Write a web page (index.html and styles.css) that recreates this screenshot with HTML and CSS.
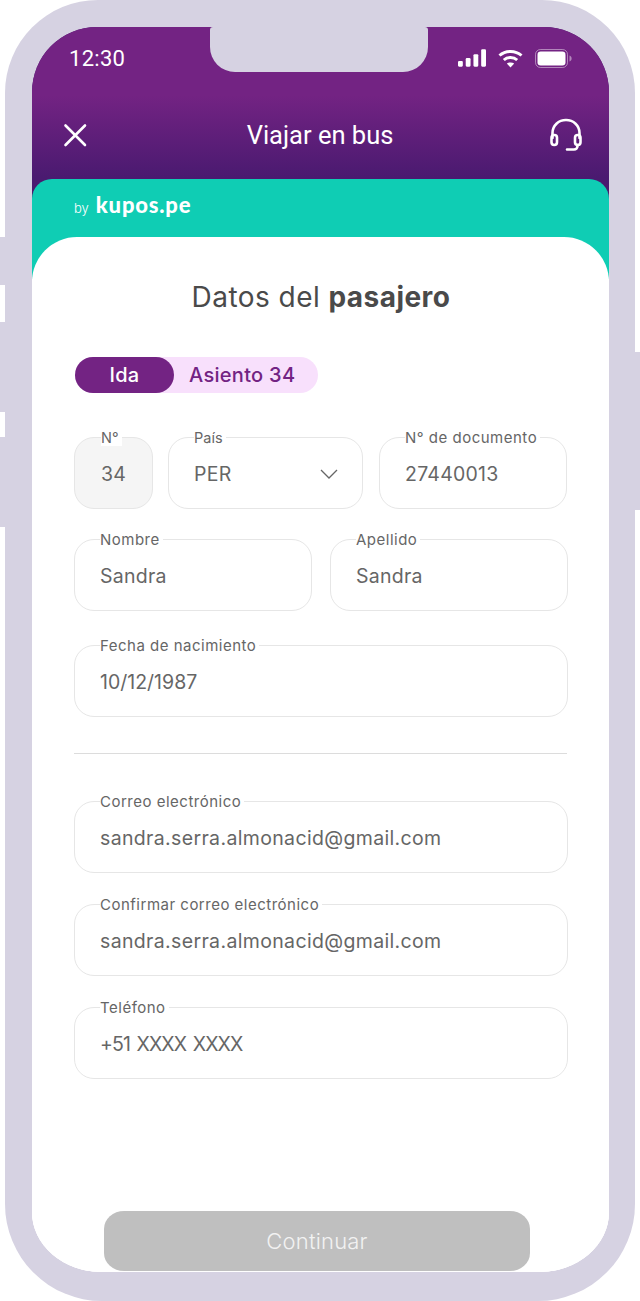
FILE: index.html
```html
<!DOCTYPE html>
<html lang="es">
<head>
    <meta charset="UTF-8">
    <meta name="viewport" content="width=device-width, initial-scale=1.0">
    <title>Viajar en bus</title>
    <link rel="stylesheet" href="styles.css">
</head>
<body>
    <div class="phone">
        <span class="side-btn left btn-a"></span>
        <span class="side-btn left btn-b"></span>
        <span class="side-btn left btn-c"></span>
        <span class="side-btn right btn-d"></span>

        <div class="screen">
            <div class="notch"></div>
            <header class="top">
                <div class="status">
                    <span class="time">12:30</span>
                    <div class="status-icons">
                        <svg width="28" height="18" viewBox="0 0 29 18" fill="#fff">
                            <rect x="0" y="12" width="5" height="6" rx="1.2"/>
                            <rect x="8" y="9" width="5" height="9" rx="1.2"/>
                            <rect x="16" y="5" width="5" height="13" rx="1.2"/>
                            <rect x="24" y="0" width="5" height="18" rx="1.2"/>
                        </svg>
                        <svg width="25" height="19" viewBox="0 0 25 19" fill="none" stroke="#fff" stroke-width="3">
                            <path d="M1.5 6.5C7.5 1 17.5 1 23.5 6.5"/>
                            <path d="M5.8 11C9.5 7.7 15.5 7.7 19.2 11"/>
                            <path d="M12.5 18.5L8.8 14.6C10.8 13 14.2 13 16.2 14.6Z" fill="#fff" stroke="none"/>
                        </svg>
                        <svg width="37" height="19" viewBox="0 0 37 19" fill="none">
                            <rect x="0.5" y="0.5" width="32" height="18" rx="5" stroke="#fff" stroke-opacity="0.45"/>
                            <rect x="2.5" y="2.5" width="28" height="14" rx="3.2" fill="#fff"/>
                            <path d="M34.5 6.5C36 7 36.6 8.2 36.6 9.5C36.6 10.8 36 12 34.5 12.5Z" fill="#fff" fill-opacity="0.45"/>
                        </svg>
                    </div>
                </div>
                <div class="appbar">
                    <svg class="close-icon" width="24" height="24" viewBox="0 0 24 24" fill="none" stroke="#fff" stroke-width="2.6" stroke-linecap="round">
                        <path d="M2.5 2.5L22 22"/>
                        <path d="M22 2.5L2.5 22"/>
                    </svg>
                    <h1 class="appbar-title">Viajar en bus</h1>
                    <svg class="help-icon" width="34" height="34" viewBox="0 0 34 34" fill="none" stroke="#fff" stroke-width="2.6" stroke-linecap="round">
                        <path d="M3.5 20V15C3.5 7.5 9.5 2 17 2C24.500 2 30.500 7.500 30.500 15V20"/>
                        <rect x="2.500" y="17" width="5.500" height="10" rx="2.700"/>
                        <rect x="26" y="17" width="5.500" height="10" rx="2.700"/>
                        <path d="M28.500 27V28C28.500 30 27 31.500 25 31.500H18"/>
                    </svg>
                </div>
            </header>

            <div class="brand-card">
                <div class="brand">
                    <span class="brand-by">by</span>
                    <span class="brand-name">kupos.pe</span>
                </div>
                <main class="sheet">
                    <h2 class="title">Datos del <b>pasajero</b></h2>

                    <div class="trip">
                        <span class="trip-tag">Ida</span>
                        <span class="trip-seat">Asiento 34</span>
                    </div>

                    <div class="row row-first">
                        <div class="field field-seat">
                            <span class="label label-plain label-seat">N°</span>
                            <span class="value">34</span>
                        </div>
                        <div class="field field-country">
                            <span class="label label-plain">País</span>
                            <span class="value">PER</span>
                            <svg class="chevron" width="18" height="10" viewBox="0 0 18 10" fill="none" stroke="#666" stroke-width="1.3">
                                <path d="M1 1L9 9L17 1"/>
                            </svg>
                        </div>
                        <div class="field field-doc">
                            <span class="label">N° de documento</span>
                            <span class="value">27440013</span>
                        </div>
                    </div>

                    <div class="row row-name">
                        <div class="field">
                            <span class="label">Nombre</span>
                            <span class="value">Sandra</span>
                        </div>
                        <div class="field">
                            <span class="label">Apellido</span>
                            <span class="value">Sandra</span>
                        </div>
                    </div>

                    <div class="field field-birth">
                        <span class="label">Fecha de nacimiento</span>
                        <span class="value value-date">10/12/1987</span>
                    </div>

                    <hr class="divider">

                    <div class="field">
                        <span class="label">Correo electrónico</span>
                        <span class="value value-email">sandra.serra.almonacid@gmail.com</span>
                    </div>
                    <div class="field field-confirm">
                        <span class="label">Confirmar correo electrónico</span>
                        <span class="value value-email">sandra.serra.almonacid@gmail.com</span>
                    </div>
                    <div class="field field-phone">
                        <span class="label">Teléfono</span>
                        <span class="value value-phone">+51 XXXX XXXX</span>
                    </div>

                    <button class="continue" type="button">Continuar</button>
                </main>
            </div>
        </div>
    </div>
</body>
</html>
```

FILE: styles.css
```css
body {
  margin: 0;
  background: #fff;
  font-family: 'Inter', 'Open Sans', sans-serif;
}

.phone {
  position: relative;
  box-sizing: border-box;
  width: 630px;
  height: 1301px;
  margin: 0 5px;
  padding: 27px 26px 29px 27px;
  background: #d6d2e2;
  border-radius: 93px 93px 97px 97px;
}

.side-btn {
  position: absolute;
  width: 6px;
  background: #d6d2e2;
}

.side-btn.left { left: -5px; }
.side-btn.right { right: -5px; }
.btn-a { top: 237px; height: 48px; }
.btn-b { top: 322px; height: 90px; }
.btn-c { top: 437px; height: 90px; }
.btn-d { top: 352px; height: 158px; }

.screen {
  position: relative;
  display: flex;
  flex-direction: column;
  height: 100%;
  overflow: hidden;
  background: linear-gradient(#4a1a70 200px, #fff 200px);
  border-radius: 65px 65px 70px 70px / 65px 65px 60px 60px;
}

.notch {
  position: absolute;
  top: 0;
  left: 178px;
  width: 218px;
  height: 45px;
  background: #d6d2e2;
  border-radius: 3px 3px 25px 25px;
}

.top {
  height: 152px;
  background: linear-gradient(#732383 0, #732383 68px, #4a1a70 150px);
  color: #fff;
}

.status {
  display: flex;
  justify-content: space-between;
  align-items: center;
  height: 62px;
  padding: 0 37px 0 37px;
}

.time {
  font-family: 'Roboto', sans-serif;
  font-size: 22px;
  letter-spacing: 0.3px;
}

.status-icons {
  display: flex;
  align-items: center;
  gap: 12px;
}

.appbar {
  display: flex;
  justify-content: space-between;
  align-items: center;
  height: 48px;
  margin-top: 22px;
  padding: 0 26px 0 31px;
}

.appbar-title {
  margin: 0 0 0 4px;
  font-family: 'Roboto', sans-serif;
  font-size: 25.5px;
  font-weight: 400;
}

.brand-card {
  flex: 1;
  display: flex;
  flex-direction: column;
  min-height: 0;
  background: linear-gradient(#0fcdb4 100px, #fff 100px);
  border-radius: 20px 20px 0 0;
}

.brand {
  display: flex;
  align-items: baseline;
  gap: 7px;
  height: 58px;
  box-sizing: border-box;
  padding: 12px 0 0 42px;
  color: #fff;
}

.brand-by {
  font-size: 13px;
  font-weight: 300;
}

.brand-name {
  font-family: 'Lato', sans-serif;
  font-size: 22px;
  font-weight: 900;
  letter-spacing: 0.8px;
}

.sheet {
  flex: 1;
  position: relative;
  padding: 0 41px 0 42px;
  background: #fff;
  border-radius: 45px 45px 0 0;
}

.title {
  margin: 0;
  padding-top: 42px;
  text-align: center;
  font-size: 28px;
  line-height: 36px;
  font-weight: 400;
  letter-spacing: 0.45px;
  color: #4a4a4a;
}

.title b {
  font-weight: 700;
}

.trip {
  display: inline-flex;
  align-items: center;
  width: 243px;
  height: 36px;
  margin: 42px 0 0 1px;
  background: #f8e0fc;
  border-radius: 18px;
  font-size: 20px;
  font-weight: 500;
  letter-spacing: 0.3px;
}

.trip-tag {
  width: 99px;
  height: 36px;
  line-height: 36px;
  text-align: center;
  color: #fff;
  background: #732383;
  border-radius: 18px;
}

.trip-seat {
  margin-left: 15px;
  color: #732383;
}

.row {
  display: flex;
}

.row-first {
  gap: 15px;
  margin-top: 44px;
}

.row-name {
  gap: 18px;
  margin-top: 30px;
}

.row-name .field {
  flex: 1;
}

.field {
  position: relative;
  box-sizing: border-box;
  display: flex;
  align-items: center;
  height: 72px;
  padding: 2px 25px 0;
  border: 1px solid #e6e6e6;
  border-radius: 20px;
  background: #fff;
}

.label {
  position: absolute;
  top: -8px;
  left: 25px;
  padding-right: 3px;
  background: #fff;
  font-size: 15px;
  line-height: 16px;
  letter-spacing: 0.5px;
  color: #666;
}

.label-plain {
  font-size: 14.5px;
  letter-spacing: 0;
}

.value {
  font-size: 19.5px;
  letter-spacing: 0.25px;
  color: #666;
}

.value-date {
  letter-spacing: 0;
}

.value-email {
  letter-spacing: 0.35px;
}

.value-phone {
  letter-spacing: -0.9px;
  word-spacing: 2px;
}

.field-seat {
  width: 79px;
  justify-content: center;
  padding: 2px 0 0;
  background: #f5f5f5;
}

.label-seat {
  left: 26px;
}

.field-country {
  width: 195px;
}

.chevron {
  position: absolute;
  right: 24px;
  top: 31px;
}

.field-doc {
  flex: 1;
  margin: 0 1px;
}

.field-birth {
  margin-top: 34px;
}

.divider {
  height: 1px;
  margin: 36px 1px 47px 0;
  border: 0;
  background: #dcdcdc;
}

.field-confirm {
  margin-top: 31px;
}

.field-phone {
  margin-top: 31px;
}

.continue {
  position: absolute;
  left: 72px;
  bottom: 1px;
  width: 426px;
  height: 60px;
  border: 0;
  border-radius: 20px / 18px;
  background: #bfbfbf;
  color: #f2f2f2;
  font-family: 'Inter', sans-serif;
  font-size: 22px;
  font-weight: 300;
  letter-spacing: 0.2px;
}
```
